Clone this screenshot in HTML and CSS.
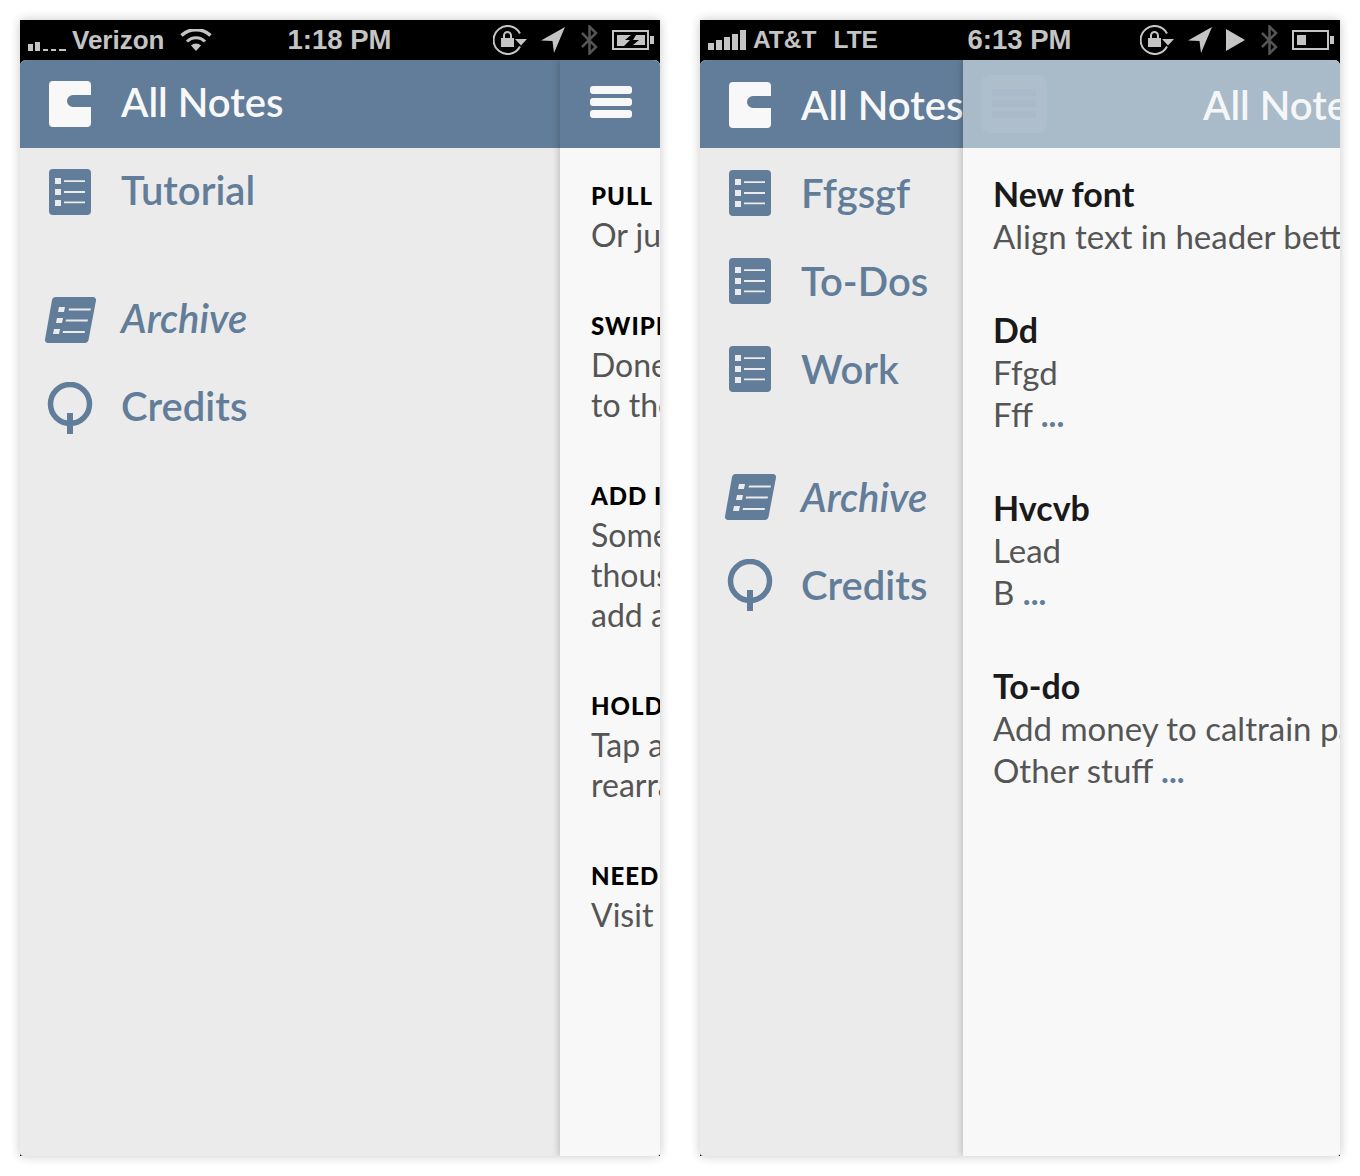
FILE: index.html
```html
<!DOCTYPE html>
<html lang="en">
<head>
    <meta charset="UTF-8">
    <title>All Notes</title>
    <link rel="stylesheet" href="styles.css">
</head>
<body>
    <svg class="sprites" width="0" height="0">
        <symbol id="ico-list" viewBox="0 0 52 52">
            <path fill-rule="evenodd" d="M8 3h34a4 4 0 0 1 4 4v38a4 4 0 0 1-4 4H8a4 4 0 0 1-4-4V7a4 4 0 0 1 4-4zM10 12v6h6v-6zM19 14.200v1.800h21v-1.800zM10 23v6h6v-6zM19 25v2h21v-2zM10 34v6h6v-6zM19 35.500v1.800h21v-1.800z"/>
        </symbol>
        <symbol id="ico-archive" viewBox="0 0 52 52">
            <path fill-rule="evenodd" d="M11 3h37a3 3 0 0 1 3 3.500l-7.500 39.500a4 4 0 0 1-4 3H3a3 3 0 0 1-3-3.500L7 6a4 4 0 0 1 4-3zM14 13l-1 5h6l1-5zM24 14.500l-.4 2h22l.4-2zM12 24l-1 5h6l1-5zM21 25.500l-.4 2h22l.4-2zM9 35l-1 5h6l1-5zM18 37l-.4 2h22l.4-2z"/>
        </symbol>
        <symbol id="ico-credits" viewBox="0 0 52 52">
            <circle cx="25" cy="22" r="19.500" fill="none" stroke="currentColor" stroke-width="5.500"/>
            <rect x="22" y="31" width="6" height="21"/>
        </symbol>
        <symbol id="ico-logo" viewBox="0 0 42 46">
            <path d="M4 0h34a4 4 0 0 1 4 4v10H24a6 6 0 0 0 0 12h18v16a4 4 0 0 1-4 4H4a4 4 0 0 1-4-4V4a4 4 0 0 1 4-4z"/>
        </symbol>
        <symbol id="ico-wifi" viewBox="0 0 32 22">
            <path d="M16 22l-5-5.500a7 7 0 0 1 10 0z"/>
            <path d="M7 12.500a12.500 12.500 0 0 1 18 0" fill="none" stroke="currentColor" stroke-width="3"/>
            <path d="M1.500 6.500a21 21 0 0 1 29 0" fill="none" stroke="currentColor" stroke-width="3.500"/>
        </symbol>
        <symbol id="ico-lock" viewBox="0 0 34 30">
            <path d="M27 21.500a14 14 0 1 1 0-13" fill="none" stroke="currentColor" stroke-width="2"/>
            <path d="M22 14h12l-6 6.500z"/>
            <path d="M8 13h13v9H8z"/>
            <path d="M11 13v-2.500a3.500 3.500 0 0 1 7 0V13" fill="none" stroke="currentColor" stroke-width="2"/>
        </symbol>
        <symbol id="ico-loc" viewBox="0 0 24 26">
            <path d="M24 0L0 13.500l11.500 .5 1.500 12z"/>
        </symbol>
        <symbol id="ico-bt" viewBox="0 0 17 30">
            <path d="M1 8l14 14-6.500 6.500V1.500L15 8 1 22" fill="none" stroke="currentColor" stroke-width="2.500"/>
        </symbol>
        <symbol id="ico-play" viewBox="0 0 19 22">
            <path d="M0 0l19 11L0 22z"/>
        </symbol>
    </svg>

    <!-- first phone -->
    <div class="phone phone-one">
        <div class="status-bar">
            <div class="status-left">
                <svg class="signal" width="38" height="20" viewBox="0 0 38 20">
                    <path d="M0 13h5v7H0zM7 11h5v9H7zM15 18h5v2h-5zM23 18h5v2h-5zM31 18h7v2h-7z"/>
                </svg>
                <span class="carrier">Verizon</span>
                <svg class="wifi" width="32" height="22"><use href="#ico-wifi"/></svg>
            </div>
            <div class="clock">1:18 PM</div>
            <div class="status-right">
                <svg width="34" height="30"><use href="#ico-lock"/></svg>
                <svg width="24" height="26"><use href="#ico-loc"/></svg>
                <svg class="bt" width="17" height="30"><use href="#ico-bt"/></svg>
                <svg width="42" height="20" viewBox="0 0 42 20">
                    <path fill-rule="evenodd" d="M0 0h37v20H0zM2 2v16h33V2z"/>
                    <path d="M38 6h4v8h-4zM5 5h14l-6 5h5l-6 6H5zM24 5h9v10H21l6-5h-6z"/>
                </svg>
            </div>
        </div>
        <div class="screen">
            <div class="app-header">
                <svg class="logo" width="42" height="46"><use href="#ico-logo"/></svg>
                <h1>All Notes</h1>
            </div>
            <ul class="menu">
                <li><svg width="52" height="52"><use href="#ico-list"/></svg>Tutorial</li>
            </ul>
            <ul class="menu menu-extra">
                <li class="archive"><svg width="52" height="52"><use href="#ico-archive"/></svg>Archive</li>
                <li><svg width="52" height="52"><use href="#ico-credits"/></svg>Credits</li>
            </ul>
            <div class="panel panel-peek">
                <div class="panel-head">
                    <div class="burger"><span></span><span></span><span></span></div>
                </div>
                <div class="tips">
                    <div class="tip">
                        <h3>PULL DOWN</h3>
                        <p>Or just tap the button</p>
                    </div>
                    <div class="tip">
                        <h3>SWIPE RIGHT</h3>
                        <p>Done with a note? Swipe it</p>
                        <p>to the right</p>
                    </div>
                    <div class="tip">
                        <h3>ADD ITEMS</h3>
                        <p>Sometimes you have a</p>
                        <p>thousand things to</p>
                        <p>add at once</p>
                    </div>
                    <div class="tip">
                        <h3>HOLD AND DRAG</h3>
                        <p>Tap and hold a note to</p>
                        <p>rearrange it</p>
                    </div>
                    <div class="tip">
                        <h3>NEED HELP?</h3>
                        <p>Visit us online</p>
                    </div>
                </div>
            </div>
        </div>
    </div>

    <!-- second phone -->
    <div class="phone phone-two">
        <div class="status-bar">
            <div class="status-left">
                <svg class="signal signal-full" width="38" height="20" viewBox="0 0 38 20">
                    <path d="M0 13h6v7H0zM8 10h6v10H8zM16 7h6v13h-6zM24 4h6v16h-6zM32 0h6v20h-6z"/>
                </svg>
                <span class="carrier">AT&amp;T</span>
                <span class="carrier lte">LTE</span>
            </div>
            <div class="clock">6:13 PM</div>
            <div class="status-right">
                <svg width="34" height="30"><use href="#ico-lock"/></svg>
                <svg width="24" height="26"><use href="#ico-loc"/></svg>
                <svg width="19" height="22"><use href="#ico-play"/></svg>
                <svg class="bt" width="17" height="30"><use href="#ico-bt"/></svg>
                <svg width="42" height="20" viewBox="0 0 42 20">
                    <path fill-rule="evenodd" d="M0 0h37v20H0zM2 2v16h33V2z"/>
                    <path d="M38 6h4v8h-4zM5 5h9v10H5z"/>
                </svg>
            </div>
        </div>
        <div class="screen">
            <div class="app-header">
                <svg class="logo" width="42" height="46"><use href="#ico-logo"/></svg>
                <h1>All Notes</h1>
            </div>
            <ul class="menu">
                <li><svg width="52" height="52"><use href="#ico-list"/></svg>Ffgsgf</li>
                <li><svg width="52" height="52"><use href="#ico-list"/></svg>To-Dos</li>
                <li><svg width="52" height="52"><use href="#ico-list"/></svg>Work</li>
            </ul>
            <ul class="menu menu-extra">
                <li class="archive"><svg width="52" height="52"><use href="#ico-archive"/></svg>Archive</li>
                <li><svg width="52" height="52"><use href="#ico-credits"/></svg>Credits</li>
            </ul>
            <div class="panel panel-open">
                <div class="panel-head">
                    <div class="burger"><span></span><span></span><span></span></div>
                    <h2>All Notes</h2>
                </div>
                <div class="notes">
                    <div class="note">
                        <h3>New font</h3>
                        <p>Align text in header better than this</p>
                    </div>
                    <div class="note">
                        <h3>Dd</h3>
                        <p>Ffgd</p>
                        <p>Fff <span class="more">...</span></p>
                    </div>
                    <div class="note">
                        <h3>Hvcvb</h3>
                        <p>Lead</p>
                        <p>B <span class="more">...</span></p>
                    </div>
                    <div class="note">
                        <h3>To-do</h3>
                        <p>Add money to caltrain pass today</p>
                        <p>Other stuff <span class="more">...</span></p>
                    </div>
                </div>
            </div>
        </div>
    </div>
</body>
</html>
```

FILE: styles.css
```css
/* Reset and Base Styles */
* {
    margin: 0;
    padding: 0;
    box-sizing: border-box;
}

body {
    font-family: Lato, "Open Sans", sans-serif;
    background: #fff;
    display: flex;
    gap: 40px;
    padding: 20px;
    height: 1176px;
    overflow: hidden;
}

ul {
    list-style: none;
}

.sprites {
    position: absolute;
}

/* Phone Frame */
.phone {
    width: 640px;
    height: 1136px;
    background: #000;
    display: flex;
    flex-direction: column;
    box-shadow: 0 0 10px rgba(0,0,0,0.22);
}

/* Status Bar */
.status-bar {
    height: 40px;
    flex: none;
    display: grid;
    grid-template-columns: 1fr auto 1fr;
    align-items: center;
    padding: 0 6px 0 8px;
    color: #c4c4c4;
    fill: #c4c4c4;
    font-family: "Liberation Sans", Arial, sans-serif;
    font-weight: 700;
}

.status-left {
    display: flex;
    align-items: center;
}

.signal {
    margin: 0 6px 0 0;
    position: relative;
    top: 1px;
}

.signal-full {
    margin-right: 7px;
    top: 0;
}

.carrier {
    font-size: 26px;
}

.phone-two .carrier {
    font-size: 24.5px;
}

.phone-two .lte {
    margin-left: 17px;
}

.wifi {
    margin-left: 16px;
}

.clock {
    font-size: 27.5px;
    margin-right: 3px;
}

.status-right {
    display: flex;
    align-items: center;
    justify-content: flex-end;
    gap: 14px;
}

.bt {
    color: #555;
    fill: #555;
    margin-left: 2px;
}

/* Screen */
.screen {
    flex: 1;
    position: relative;
    overflow: hidden;
    background: #ebebeb;
    border-radius: 6px 6px 3px 3px;
}

.app-header {
    height: 88px;
    background: #627d99;
    display: flex;
    align-items: center;
    padding-left: 29px;
    color: #f8f8f8;
    fill: #f8f8f8;
}

.app-header h1 {
    font-size: 40px;
    font-weight: 600;
    margin-left: 30px;
    white-space: nowrap;
}

.phone-one .app-header h1 {
    margin-bottom: 4px;
}

/* Menu */
.menu {
    padding-left: 25px;
    color: #627d99;
    fill: #627d99;
    font-size: 40px;
    font-weight: 600;
}

.menu li {
    height: 88px;
    display: flex;
    align-items: center;
    gap: 24px;
}

.phone-one .menu li {
    padding-bottom: 4px;
}

.phone-one .menu svg {
    margin-top: 4px;
}

.menu-extra {
    margin-top: 40px;
}

.archive {
    font-style: italic;
}

.phone-two .app-header {
    padding-top: 2px;
}

.phone-two .menu:first-of-type {
    padding-top: 1px;
}

/* Sliding Panel */
.panel {
    position: absolute;
    top: 0;
    bottom: 0;
    right: 0;
    overflow: hidden;
    background: #f8f8f8;
    box-shadow: -1px 0 7px rgba(0,0,0,0.22);
}

.panel-head {
    height: 88px;
    display: flex;
}

.panel-peek {
    width: 100px;
}

.panel-peek .panel-head {
    background: #627d99;
}

.burger {
    display: flex;
    flex-direction: column;
    flex: none;
}

.burger span {
    display: block;
    background: #f8f8f8;
}

.panel-peek .burger {
    width: 42px;
    margin: 26px 0 0 30px;
    gap: 4px;
}

.panel-peek .burger span {
    height: 8px;
    border-radius: 3px;
}

.panel-open {
    width: 377px;
}

.panel-open .panel-head {
    background: #a9bac8;
    color: #f4f6f7;
}

.panel-open .burger {
    width: 66px;
    height: 58px;
    margin: 15px 0 0 18px;
    padding: 14px 11px 0;
    gap: 4px;
    background: rgba(255,255,255,0.06);
    border-radius: 8px;
}

.panel-open .burger span {
    height: 7px;
    background: rgba(98,125,153,0.05);
}

.panel-open h2 {
    font-size: 40px;
    font-weight: 600;
    margin: 23px 0 0 156px;
    line-height: 44px;
    white-space: nowrap;
}

/* Tips */
.tips {
    padding: 28px 0 0 31px;
    white-space: nowrap;
}

.tip {
    margin-bottom: 51px;
    font-size: 32px;
    line-height: 40px;
    color: #555;
}

.tip h3 {
    color: #000;
    font-size: 24px;
    line-height: 39px;
    font-weight: 900;
    letter-spacing: 1px;
}

/* Notes */
.notes {
    padding: 25px 0 0 30px;
    white-space: nowrap;
}

.note {
    margin-bottom: 52px;
    font-size: 33px;
    line-height: 42px;
    color: #555;
}

.note h3 {
    color: #1a1a1a;
    font-size: 34px;
    font-weight: 700;
}

.more {
    color: #627d99;
    font-weight: 700;
}
```
